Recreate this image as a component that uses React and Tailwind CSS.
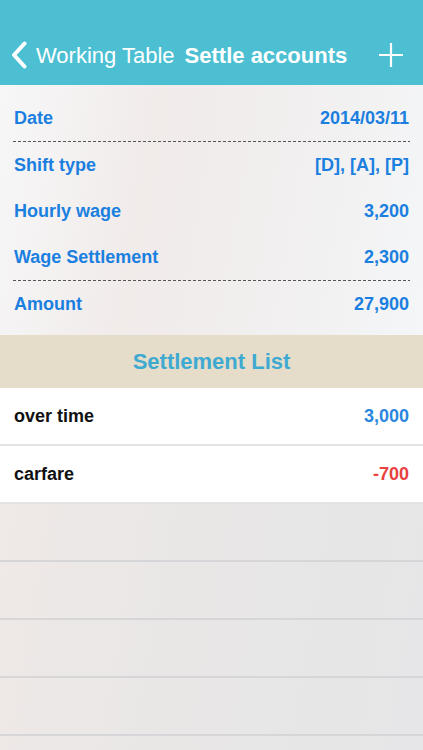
import { Fragment } from 'react'

const font = { fontFamily: '"Liberation Sans", Arial, sans-serif' }

const info = [
  { label: 'Date', value: '2014/03/11', dashed: true },
  { label: 'Shift type', value: '[D], [A], [P]' },
  { label: 'Hourly wage', value: '3,200' },
  { label: 'Wage Settlement', value: '2,300', dashed: true },
  { label: 'Amount', value: '27,900' },
]

const items = [
  { name: 'over time', amount: '3,000', color: 'text-[#2b86e0]' },
  { name: 'carfare', amount: '-700', color: 'text-[#e8413e]' },
]

function Dashed() {
  return (
    <div className="mx-[13px] h-px bg-[repeating-linear-gradient(90deg,#555_0,#555_3px,transparent_3px,transparent_5px)]" />
  )
}

export default function App() {
  return (
    <div style={font} className="w-[423px] h-[750px] overflow-hidden flex flex-col bg-[#e9e7e6]">
      <div className="h-[85px] shrink-0 bg-[#4cc0d2] flex items-end pb-[14px] px-[11px] text-white">
        <svg width="16" height="28" viewBox="0 0 16 28" className="mb-[2px]">
          <path d="M13.5 2.5 L3 14 L13.5 25.5" fill="none" stroke="white" strokeWidth="4" strokeLinecap="round" strokeLinejoin="round" />
        </svg>
        <span className="ml-[9px] text-[22px] leading-[30px]">Working Table</span>
        <span className="ml-[10px] text-[22px] leading-[30px] font-bold">Settle accounts</span>
        <svg width="26" height="26" viewBox="0 0 26 26" className="ml-auto mr-[8px] mb-[3px]">
          <path d="M13 1 V25 M1 13 H25" stroke="white" strokeWidth="2.2" />
        </svg>
      </div>

      <div className="h-[250px] shrink-0 pt-[10px] bg-[linear-gradient(100deg,#f7f7f8_0%,#f1ebea_35%,#f1eeee_60%,#f4f6f8_100%)]">
        {info.map((r) => (
          <Fragment key={r.label}>
            <div className="h-[46px] flex items-center justify-between px-[14px] text-[18px] font-bold text-[#1b7fe0]">
              <span>{r.label}</span>
              <span>{r.value}</span>
            </div>
            {r.dashed ? <Dashed /> : null}
          </Fragment>
        ))}
      </div>

      <div className="h-[53px] shrink-0 bg-[#e5ddc9] flex items-center justify-center text-[22px] font-bold text-[#3eaad2]">
        Settlement List
      </div>

      {items.map((it) => (
        <div key={it.name} className="h-[58px] shrink-0 bg-white border-b-2 border-[#e3e3e3] flex items-center justify-between px-[14px] text-[18px] font-bold">
          <span className="text-[#111]">{it.name}</span>
          <span className={it.color}>{it.amount}</span>
        </div>
      ))}

      <div className="flex-1 bg-[linear-gradient(100deg,#efe9e7_0%,#e9e7e6_40%,#e6e6e8_100%)]">
        {[0, 1, 2, 3, 4].map((i) => (
          <div key={i} className="h-[58px] border-b-2 border-[#d6d6d8]" />
        ))}
      </div>
    </div>
  )
}
